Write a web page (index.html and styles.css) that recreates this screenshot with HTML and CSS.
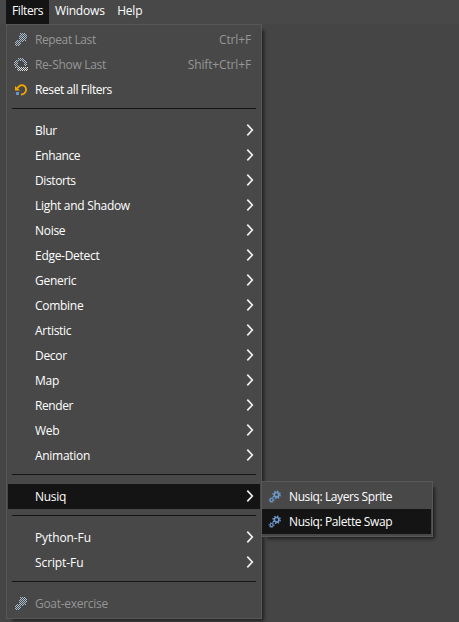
FILE: index.html
```html
<!DOCTYPE html>
<html lang="en">
<head>
<meta charset="utf-8">
<title>Filters</title>
<link rel="stylesheet" href="styles.css">
</head>
<body>
<svg class="defs" width="0" height="0">
  <defs>
    <pattern id="dither" width="2" height="2" patternUnits="userSpaceOnUse"><path d="M0 0h1v1H0zM1 1h1v1H1z" fill="#a9bdd2"/></pattern>
    <pattern id="dither-light" width="2" height="2" patternUnits="userSpaceOnUse"><path d="M0 0h1v1H0zM1 1h1v1H1z" fill="#e0e0e0"/></pattern>
    <g id="gears" fill="none" stroke="#6f9bce">
      <circle cx="8.6" cy="4.8" r="2.3" stroke-width="1.7"/>
      <circle cx="8.6" cy="4.8" r="3.6" stroke-width="1.400" stroke-dasharray="1.41 1.42"/>
      <circle cx="3.6" cy="10" r="1.5" stroke-width="1.2"/>
      <circle cx="3.6" cy="10" r="2.5" stroke-width="1" stroke-dasharray=".98 .98"/>
    </g>
    <symbol id="i-gears" viewBox="0 0 14 14"><use href="#gears"/></symbol>
    <symbol id="i-gears-off" viewBox="0 0 14 14" shape-rendering="crispEdges"><path d="M6 0h5v1h2v5h-1v2h-3v1H7v3H5v1H1V8h2V7h2V3h1z" fill="url(#dither)"/></symbol>
    <symbol id="i-show-off" viewBox="0 0 14 14" shape-rendering="crispEdges"><path d="M4 0h5v1h2v2h2v5h-3V5H9V3H5v1H4v3h1v5H3v-2H1V8H0V4h1V2h3z" fill="url(#dither)"/><path d="M4 9h10v4H4z" fill="url(#dither-light)"/></symbol>
    <symbol id="i-reset" viewBox="0 0 14 14"><path d="M3.400 5.200C5 2.600 8 1.200 10.400 3c2.500 2 2.200 5.700-.2 7.500-1 .7-2 1-3.200 1" fill="none" stroke="#f6a800" stroke-width="1.800"/><path d="M1 3v4.500h5z" fill="#f6a800"/><path d="M2 9h3v3H2z" fill="#5f95d3"/></symbol>
    <symbol id="i-arrow" viewBox="0 0 8 12"><path d="M1.300 .6 6.300 6l-5 5.400" fill="none" stroke="#efefef" stroke-width="1.700"/></symbol>
  </defs>
</svg>
<nav class="menubar"><span class="tab active tight">Filters</span><span class="tab">Windows</span><span class="tab">Help</span></nav>
<main class="menu">
  <div class="row off"><svg class="icon"><use href="#i-gears-off"/></svg><span class="tight">Repeat Last</span><span class="key">Ctrl+F</span></div>
  <div class="row off"><svg class="icon"><use href="#i-show-off"/></svg><span>Re-Show Last</span><span class="key">Shift+Ctrl+F</span></div>
  <div class="row"><svg class="icon"><use href="#i-reset"/></svg><span class="tight">Reset all Filters</span></div>
  <hr>
  <div class="row"><span>Blur</span><svg class="arrow"><use href="#i-arrow"/></svg></div>
  <div class="row"><span class="tight">Enhance</span><svg class="arrow"><use href="#i-arrow"/></svg></div>
  <div class="row"><span class="tight">Distorts</span><svg class="arrow"><use href="#i-arrow"/></svg></div>
  <div class="row"><span>Light and Shadow</span><svg class="arrow"><use href="#i-arrow"/></svg></div>
  <div class="row"><span>Noise</span><svg class="arrow"><use href="#i-arrow"/></svg></div>
  <div class="row"><span>Edge-Detect</span><svg class="arrow"><use href="#i-arrow"/></svg></div>
  <div class="row"><span>Generic</span><svg class="arrow"><use href="#i-arrow"/></svg></div>
  <div class="row"><span>Combine</span><svg class="arrow"><use href="#i-arrow"/></svg></div>
  <div class="row"><span>Artistic</span><svg class="arrow"><use href="#i-arrow"/></svg></div>
  <div class="row"><span>Decor</span><svg class="arrow"><use href="#i-arrow"/></svg></div>
  <div class="row"><span>Map</span><svg class="arrow"><use href="#i-arrow"/></svg></div>
  <div class="row"><span class="tight">Render</span><svg class="arrow"><use href="#i-arrow"/></svg></div>
  <div class="row"><span>Web</span><svg class="arrow"><use href="#i-arrow"/></svg></div>
  <div class="row"><span>Animation</span><svg class="arrow"><use href="#i-arrow"/></svg></div>
  <hr>
  <div class="row active"><span>Nusiq</span><svg class="arrow"><use href="#i-arrow"/></svg>
    <div class="submenu">
      <div class="row"><svg class="icon"><use href="#i-gears"/></svg><span class="tight">Nusiq: Layers Sprite</span></div>
      <div class="row active"><svg class="icon"><use href="#i-gears"/></svg><span class="tight">Nusiq: Palette Swap</span></div>
    </div>
  </div>
  <hr>
  <div class="row"><span class="loose">Python-Fu</span><svg class="arrow"><use href="#i-arrow"/></svg></div>
  <div class="row"><span class="loose">Script-Fu</span><svg class="arrow"><use href="#i-arrow"/></svg></div>
  <hr>
  <div class="row off"><svg class="icon"><use href="#i-gears-off"/></svg><span>Goat-exercise</span></div>
</main>
</body>
</html>
```
FILE: styles.css
```css
* { box-sizing: border-box; }
body {
  margin: 0;
  height: 622px;
  overflow: hidden;
  background: #454545;
  color: #fff;
  font: 12px/25px "Open Sans", "Noto Sans", sans-serif;
  letter-spacing: -0.29px;
  white-space: nowrap;
}
.defs { position: absolute; }
.tight { letter-spacing: -0.4px; }
.loose { letter-spacing: -0.1px; }
.menubar { display: flex; height: 24px; padding-left: 6px; background: #484848; line-height: 22px; }
.tab { padding: 0 6px; }
.tab + .tab { padding-right: 6.500px; letter-spacing: -0.2px; }
.tab.active { width: 43px; background: #141414; }
.menu {
  width: 256px;
  height: 595px;
  margin-left: 6px;
  padding: 2px 1px;
  border: 1px solid #575757;
  background: #484848;
  box-shadow: 4px 4px 3px -2px #222;
}
.row { position: relative; display: flex; align-items: center; height: 25px; padding: 0 9px 0 27px; }
.row.off { color: #969696; }
.row.active { background: #141414; }
.icon { position: absolute; left: 6px; top: 6px; width: 14px; height: 14px; }
.key { margin-left: auto; letter-spacing: -0.15px; }
.arrow { width: 8px; height: 12px; margin: 0 -3px 1px auto; }
hr { height: 1px; margin: 6px 4px 9px; border: 0; background: #141414; }
.submenu {
  position: absolute;
  left: 253px;
  top: -3px;
  width: 172px;
  height: 56px;
  padding: 2px 1px 2px 0;
  border: 1px solid #575757;
  background: #484848;
  box-shadow: 4px 4px 3px -2px #222;
}
```
